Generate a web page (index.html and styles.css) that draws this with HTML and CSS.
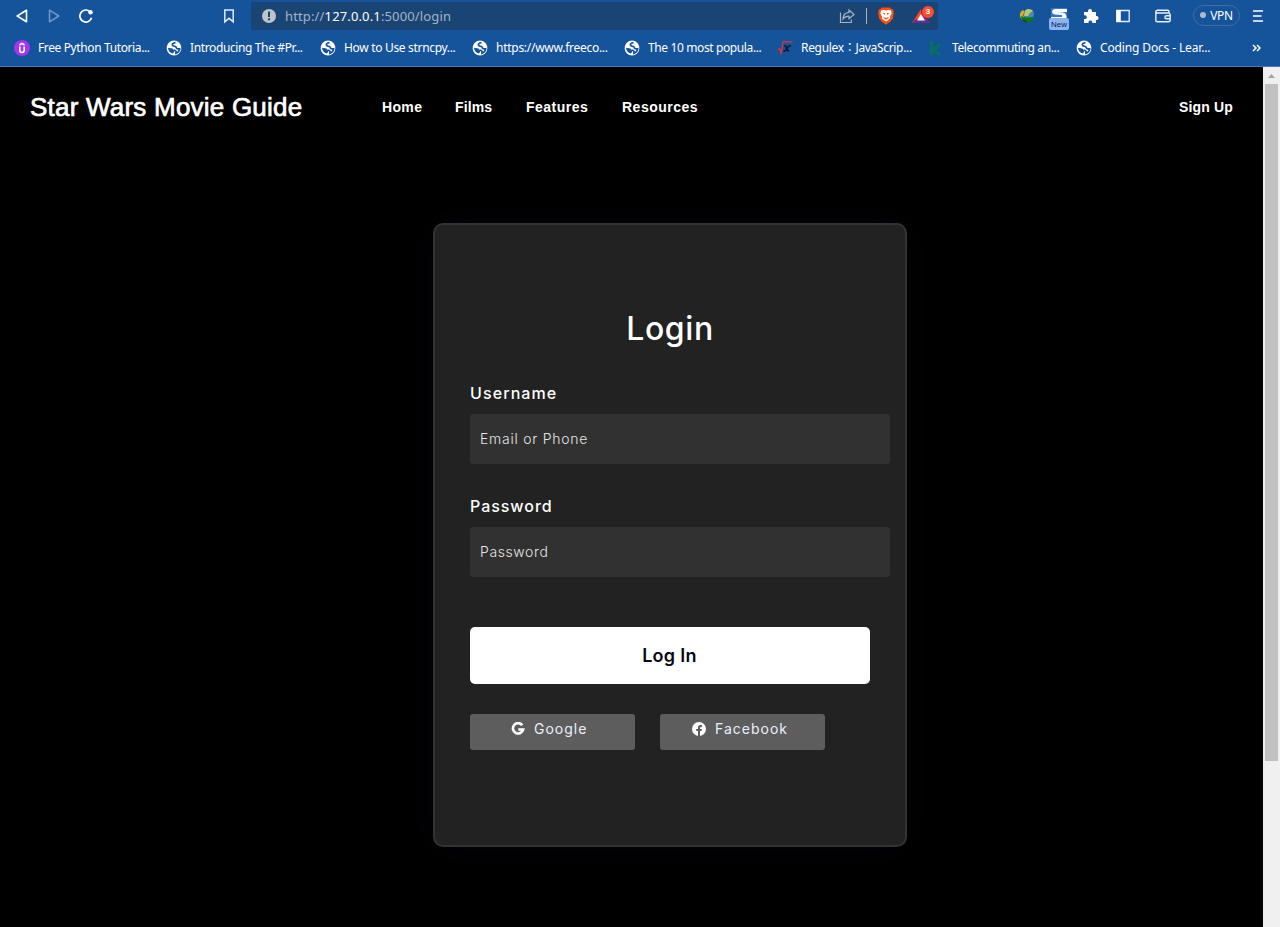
FILE: index.html
```html
<!DOCTYPE html>
<html lang="en">
<head>
<meta charset="utf-8">
<title>Login</title>
<link rel="stylesheet" href="styles.css">
</head>
<body>
<svg class="defs" width="0" height="0"><defs>
<symbol id="globe" viewBox="0 0 16 16"><circle cx="8" cy="8" r="7.400" fill="#fff"/><path d="M9.500 2.600C7 3 6 4 6.400 5.200c.5 1.200 2.300.9 3.300 1.500 1 .7.300 1.700 1.500 2.100 1 .3 1.500 0 2.500.1-.4 2.200-1.800 3.800-3.800 4.600-.3-.9.400-1.500 0-2.300-.4-.7-1.500-.7-2-1.400" fill="none" stroke="#15539b" stroke-width="1.700"/><path d="M2 7.800l4.500.6 1.900 2.300-1.200 2.900C4.300 13.300 2.200 11.200 2 7.800z" fill="#15539b"/></symbol>
</defs></svg>
<header class="browser">
  <div class="toolbar">
    <svg class="ic back" viewBox="0 0 16 16"><path d="M12.500 2.200v11.600L3.200 8z" fill="none" stroke="#fff" stroke-width="1.600" stroke-linejoin="round"/></svg>
    <svg class="ic forward" viewBox="0 0 16 16"><path d="M3.500 2.200v11.600L12.800 8z" fill="none" stroke="#7398c4" stroke-width="1.500" stroke-linejoin="round"/></svg>
    <svg class="ic reload" viewBox="0 0 16 16"><path d="M11 2.900A6 6 0 1 0 13.600 9.800" fill="none" stroke="#fff" stroke-width="1.700"/><circle cx="12.500" cy="4.200" r="2.200" fill="#fff"/></svg>
    <svg class="ic mark" viewBox="0 0 16 16"><path d="M3.800 2h8.400v11.800L8 10.300l-4.200 3.500z" fill="none" stroke="#dfe8f4" stroke-width="1.500"/></svg>
    <div class="address">
      <svg class="info" viewBox="0 0 14 14"><circle cx="7" cy="7" r="7" fill="#bfc4ca"/><path d="M6 2.500h2v5.500H6zM6 9.300h2v2H6z" fill="#194474"/></svg>
      <span class="url">http://<b>127.0.0.1</b>:5000/login</span>
      <svg class="share" viewBox="0 0 16 16"><path d="M1.500 4.500v10h10.800v-3" fill="none" stroke="#a8b4c4" stroke-width="1.200"/><path d="M10 2l5 4.500-5 4.200V8.200C7 8.200 5.300 9 4 11c.1-3.600 2-6.300 6-6.600z" fill="none" stroke="#a8b4c4" stroke-width="1.200"/></svg>
      <i class="rule"></i>
      <svg class="brave" viewBox="0 0 16 18"><path d="M4 .5h8l1.500 1.500 1.500.2.8 3-.8 6L12 15l-4 2.700L4 15 1 11.200l-.8-6 .8-3L2.500 2z" fill="#fb5012"/><path d="M3 3.500l2.500-.5L8 3.500l2.500-.5 2.500.5.700 3-1.700 3 .2 2L8 14.500 3.800 11.500l.2-2-1.700-3z" fill="#fff"/><path d="M4.200 5.500l2.800.7v1.700zM11.800 5.500L9 6.200v1.700zM5.500 10l2.500 1.100 2.500-1.100v1L8 12.700 5.500 11z" fill="#fb5012"/></svg>
      <span class="bat"><svg viewBox="0 0 20 16" width="20" height="16"><path d="M10 1L1 15h5l4-7z" fill="#ff4724"/><path d="M10 1l9 14h-4l-5-7z" fill="#9e1f63"/><path d="M1 15h18l-3-4H5z" fill="#662d91"/><path d="M10 6l4 6.500H6z" fill="#fff"/></svg><em>3</em></span>
    </div>
    <svg class="ic idm" viewBox="0 0 16 16"><path d="M4 2C0 4 0 9 3 11l3-1-2-3 2-3z" fill="#d9a928"/><circle cx="9.800" cy="6.200" r="5.200" fill="#4b86b4"/><path d="M6 3c2-3 6-2 8 0l-3 2-2 3-4 0z" fill="#b5c970"/><path d="M2 8l5 1.500L15.500 9 13 12.500 9 15l-3-3-3-.5z" fill="#087b12"/><path d="M3 12l3 2 3 1-3-3z" fill="#402d12"/></svg>
    <span class="ssite"><svg width="16" height="12" viewBox="0 0 16 12"><path d="M0 0h16v12H0z" fill="#3c78b4"/><path d="M16 1H5C0 1 0 6 4 6.500l7 .5v2H0v3h14c3-3 1-7-2-7.500L6 4h10z" fill="#fff"/></svg><em>New</em></span>
    <svg class="ic puzzle" viewBox="0 0 16 16"><path d="M1 4h4V3a2 2 0 1 1 4 0v1h4v4h.6a2 2 0 1 1 0 4H13v3H9.300v-1a2 2 0 0 0-3.800 0v1H1v-4h1a1.800 1.800 0 0 0 0-3.700H1z" fill="#fff"/></svg>
    <svg class="ic side" viewBox="0 0 16 16"><path d="M1.800 2.500h12.400v11H1.800z" fill="none" stroke="#e8eff8" stroke-width="1.300"/><path d="M1.500 2h4.300v12H1.500z" fill="#fff"/></svg>
    <svg class="ic wallet" viewBox="0 0 16 16"><path d="M14 5V3.500Q14 2.300 12.500 2.300H2.500Q.8 2.300.8 4v8q0 1.800 1.800 1.800h11q1.600 0 1.600-1.500V6.800Q15.200 5 13.500 5H2.500Q.8 5 .8 3.500M15 7.800h-3.300q-1.800 0-1.800 1.500t1.800 1.500H15" fill="none" stroke="#e8eff8" stroke-width="1.400"/></svg>
    <span class="vpn"><i></i>VPN</span>
    <svg class="ic menu" viewBox="0 0 16 16"><path d="M3 3h10M3 8h8.500M3 13h10" stroke="#fff" stroke-width="1.700"/></svg>
  </div>
  <nav class="bookmarks">
    <a class="bm"><svg viewBox="0 0 16 16"><circle cx="8" cy="8" r="8" fill="#a435f0"/><path d="M5.800 6.500v3.800q0 2.200 2.200 2.200t2.200-2.200V6.500M5.500 5L8 3.400 10.500 5" fill="none" stroke="#fff" stroke-width="1.600"/></svg><span class="t1">Free Python Tutoria...</span></a>
    <a class="bm wide"><svg><use href="#globe"/></svg><span class="t2">Introducing The #Pr...</span></a>
    <a class="bm"><svg><use href="#globe"/></svg><span class="t3">How to Use strncpy...</span></a>
    <a class="bm"><svg><use href="#globe"/></svg><span class="t4">https://www.freeco...</span></a>
    <a class="bm mid"><svg><use href="#globe"/></svg><span class="t5">The 10 most popula...</span></a>
    <a class="bm slim"><svg viewBox="0 0 16 16"><path d="M1 9l2 .2L4.300 14 6 1.800h9.500" fill="none" stroke="#e3323c" stroke-width="1.300"/><path d="M7 6q2-.8 2.500 2t2.500 3M14 6q-2-1-4 2.500T6.500 11" fill="none" stroke="#0b1730" stroke-width="1.600"/></svg><span class="t6">Regulex：JavaScrip...</span></a>
    <a class="bm short"><svg viewBox="0 0 16 16"><path d="M3.500 1v14M12 4.500L5 10l7.500 5" fill="none" stroke="#087063" stroke-width="3"/></svg><span class="t7">Telecommuting an...</span></a>
    <a class="bm"><svg><use href="#globe"/></svg><span class="t8">Coding Docs - Lear...</span></a>
    <svg class="more" viewBox="0 0 10 8"><path d="M1 1l3 3-3 3M5 1l3 3-3 3" fill="none" stroke="#fff" stroke-width="1.500"/></svg>
  </nav>
</header>
<div class="viewport">
  <main class="page">
    <nav class="site-nav">
      <a class="brand">Star Wars Movie Guide</a>
      <a class="home">Home</a><a class="films">Films</a><a class="features">Features</a><a>Resources</a>
      <a class="signup">Sign Up</a>
    </nav>
    <form class="card">
      <h1><span>Login</span></h1>
      <label class="l-user" for="username">Username</label>
      <input class="in-user" type="text" placeholder="Email or Phone" id="username">
      <label class="l-pass" for="password">Password</label>
      <input class="in-pass" type="password" placeholder="Password" id="password">
      <button type="button"><span>Log In</span></button>
      <div class="social">
        <a class="google"><svg viewBox="0 0 14 14"><path d="M11.300 3.200A5.200 5.200 0 1 0 12.200 7.500H7.300" fill="none" stroke="#fff" stroke-width="2.600"/></svg><span>Google</span></a>
        <a class="facebook"><svg viewBox="0 0 14 14"><circle cx="7" cy="7" r="7" fill="#fff"/><path d="M6 14V9H4.200V7H6V5.500q0-2.500 2.500-2.500h1.400v1.900H9Q8 4.900 8 5.900V7h1.900l-.4 2H8v5z" fill="#5d5d5d"/></svg><span>Facebook</span></a>
      </div>
    </form>
  </main>
  <div class="scrollbar"><svg viewBox="0 0 17 17"><path d="M5 11l3.500-4 3.500 4z" fill="#a3a3a3"/></svg><i></i></div>
</div>
</body>
</html>
```
FILE: styles.css
```css
* { box-sizing: border-box; }
body { margin: 0; height: 927px; overflow: hidden; background: #000; display: flex; flex-direction: column; font-family: "Liberation Sans", sans-serif; }
.defs { position: absolute; }
.browser { height: 67px; flex: none; background: #15539b; border-bottom: 1px solid #4a7ab8; color: #fff; font-family: "Noto Sans", "Noto Sans CJK TC", sans-serif; }
.toolbar { height: 32px; display: flex; align-items: center; padding-left: 14px; }
.ic { width: 16px; height: 16px; flex: none; }
.forward, .reload { margin-left: 16px; }
.mark { margin-left: 127px; }
.address { width: 687px; height: 28px; margin-left: 14px; flex: none; border-radius: 3px; background: #194474; display: flex; align-items: center; padding-left: 11px; }
.info { width: 14px; height: 14px; }
.url { margin-left: 9px; width: 554px; color: #a3b4c8; font-size: 13px; letter-spacing: .14px; line-height: 20px; }
.url b { color: #fff; font-weight: 400; }
.share { width: 16px; height: 16px; }
.rule { width: 1px; height: 16px; margin-left: 11px; background: #a5b0be; }
.brave { width: 16px; height: 18px; margin-left: 11px; }
.bat { position: relative; width: 22px; height: 16px; margin-left: 17px; }
.bat svg { display: block; }
.bat em { position: absolute; left: 11px; top: -2px; width: 12px; height: 12px; border-radius: 6px; background: #fc4c2e; font: 700 8px/12px "Liberation Sans", sans-serif; text-align: center; }
.idm { margin-left: 81px; }
.ssite { position: relative; width: 20px; height: 22px; margin: 6px 0 0 14px; display: flex; flex-direction: column; align-items: center; }
.ssite em { position: absolute; top: 10px; left: 0; width: 20px; height: 12px; background: #8ab4f8; border-radius: 2px; color: #102040; font: 8px/14px "Liberation Sans", sans-serif; text-align: center; }
.puzzle { margin-left: 14px; }
.side { margin-left: 16px; }
.wallet { margin-left: 24px; }
.vpn { width: 47px; height: 21px; margin: -1px 0 0 22px; border: 1px solid #486c9d; border-radius: 11px; display: flex; align-items: center; justify-content: center; gap: 4px; font-size: 12px; letter-spacing: -.4px; line-height: 17px; padding-bottom: 1px; }
.vpn i { width: 6px; height: 6px; border-radius: 3px; background: #b1b9cc; }
.menu { margin-left: 10px; }
.bookmarks { height: 32px; display: flex; align-items: center; padding-left: 14px; font-size: 12px; line-height: 16px; }
.bm { width: 152px; flex: none; display: flex; align-items: center; gap: 8px; white-space: nowrap; }
.bm svg { width: 16px; height: 16px; flex: none; }
.bm.wide { width: 154px; }
.bm.mid { width: 153px; }
.bm.slim { width: 151px; }
.bm.short { width: 148px; }
.t1, .t2, .t5, .t7 { letter-spacing: -.38px; }
.t3, .t6 { letter-spacing: -.32px; }
.t4 { letter-spacing: -.27px; }
.t8 { letter-spacing: -.14px; }
.more { width: 10px; height: 8px; margin-left: 24px; }
.viewport { flex: 1; display: flex; }
.page { width: 1263px; background: #000; color: #fff; }
.site-nav { height: 80px; display: flex; align-items: center; padding: 0 30px; font-size: 14px; font-weight: 700; letter-spacing: .5px; }
.brand { width: 352px; font-size: 26px; font-weight: 400; letter-spacing: .22px; -webkit-text-stroke: .7px #fff; }
.home { width: 73px; letter-spacing: .35px; }
.films { width: 71px; letter-spacing: .1px; }
.features { width: 96px; }
.signup { margin-left: auto; letter-spacing: .15px; }
.card { width: 474px; height: 624px; margin: 76px 0 0 433px; padding: 78px 35px 0; border: 2px solid #333; border-radius: 10px; background: #222; box-shadow: 0 0 40px rgba(8,7,16,.6); font-family: Inter, sans-serif; }
h1 { margin: 0; padding-top: 2px; height: 48px; font-size: 32px; font-weight: 500; line-height: 48px; text-align: center; letter-spacing: .6px; }
label { display: block; font-size: 16px; font-weight: 500; line-height: 24px; margin-top: 30px; }
.l-user { letter-spacing: 1.1px; }
.l-pass { letter-spacing: .95px; }
input { display: block; width: 420px; height: 50px; margin-top: 9px; padding: 0 10px 2px; border: 0; border-radius: 3px; background: #313131; font: 300 14px Inter, sans-serif; letter-spacing: .75px; color: #fff; }
.in-pass { letter-spacing: .6px; }
input::placeholder { color: #e5e5e5; opacity: 1; }
button { display: block; width: 400px; height: 57px; margin-top: 50px; padding: 0 1px 0 0; border: 0; border-radius: 5px; background: #fff; color: #080710; font: 600 18px Inter, sans-serif; letter-spacing: .3px; }
.social { display: flex; gap: 25px; margin-top: 30px; color: #eaf0fb; font-size: 14px; letter-spacing: 1px; }
.social a { width: 165px; height: 36px; border-radius: 3px; background: #5d5d5d; display: flex; align-items: flex-start; padding: 5px 0 0 41px; line-height: 20px; }
.social .facebook { padding-left: 32px; }
.social svg { width: 14px; height: 14px; margin: 3px 9px 0 0; }
.scrollbar { width: 17px; background: #f0f0f0; display: flex; flex-direction: column; }
.scrollbar svg { width: 17px; height: 17px; }
.scrollbar i { width: 13px; height: 677px; margin-left: 2px; background: #c1c1c1; }
```
